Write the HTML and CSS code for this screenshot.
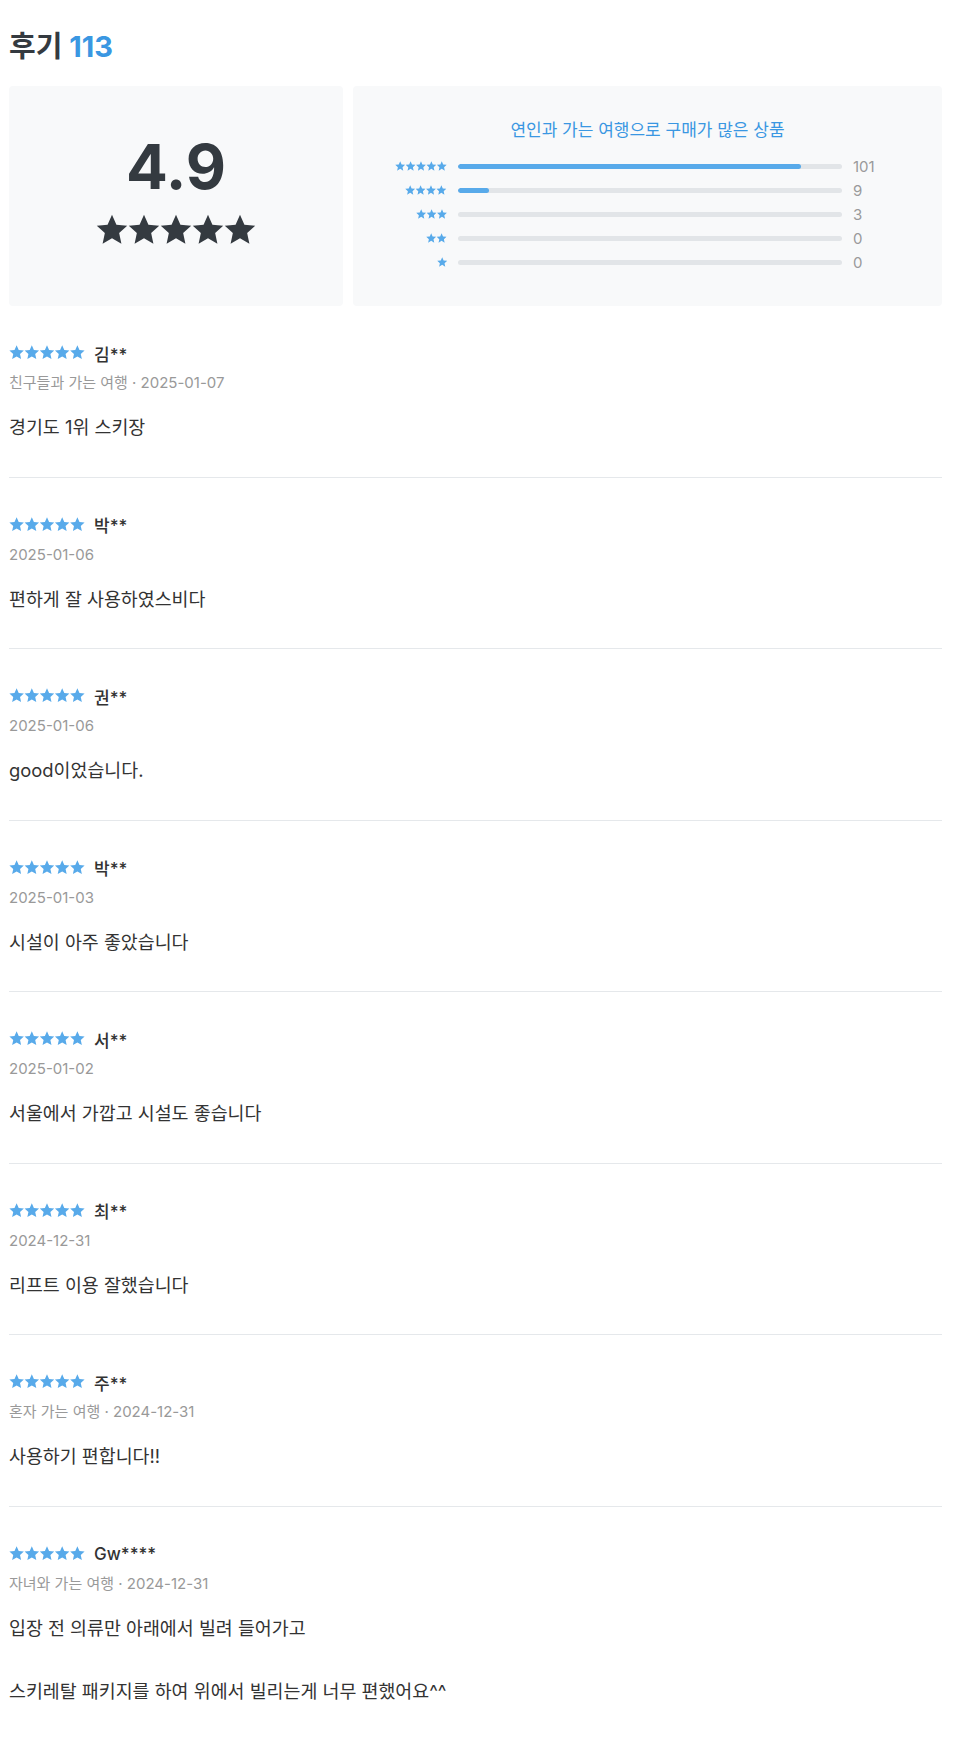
FILE: index.html
```html
<!DOCTYPE html>
<html lang="ko">

<head>
    <meta charset="UTF-8">
    <meta name="viewport" content="width=device-width, initial-scale=1">
    <title>후기</title>
    <link rel="stylesheet" href="styles.css">
</head>

<body>
    <svg class="defs" aria-hidden="true">
        <symbol id="star" viewBox="-10 -10.2 20 19.5">
            <polygon points="0,-10 2.763,-3.802 9.511,-3.09 4.470,1.452 5.878,8.09 0,4.7 -5.878,8.09 -4.470,1.452 -9.511,-3.09 -2.763,-3.802" />
        </symbol>
    </svg>

    <div class="reviews">
        <h2 class="reviews-title">후기 <span class="count">113</span></h2>

        <div class="summary">
            <div class="summary-score">
                <div class="score">4.9</div>
                <svg class="stars stars-big" viewBox="0 0 100 20">
                    <use href="#star" x="0" width="20" height="20" />
                    <use href="#star" x="20" width="20" height="20" />
                    <use href="#star" x="40" width="20" height="20" />
                    <use href="#star" x="60" width="20" height="20" />
                    <use href="#star" x="80" width="20" height="20" />
                </svg>
            </div>

            <div class="summary-dist">
                <p class="dist-title">연인과 가는 여행으로 구매가 많은 상품</p>
                <div class="dist-rows">
                    <div class="dist-row">
                        <svg class="mini-stars" viewBox="0 0 100 20">
                            <use href="#star" x="0" width="20" height="20" />
                            <use href="#star" x="20" width="20" height="20" />
                            <use href="#star" x="40" width="20" height="20" />
                            <use href="#star" x="60" width="20" height="20" />
                            <use href="#star" x="80" width="20" height="20" />
                        </svg>
                        <div class="bar"><div class="bar-fill" style="width: 89.4%"></div></div>
                        <span class="dist-count">101</span>
                    </div>
                    <div class="dist-row">
                        <svg class="mini-stars" viewBox="0 0 80 20">
                            <use href="#star" x="0" width="20" height="20" />
                            <use href="#star" x="20" width="20" height="20" />
                            <use href="#star" x="40" width="20" height="20" />
                            <use href="#star" x="60" width="20" height="20" />
                        </svg>
                        <div class="bar"><div class="bar-fill" style="width: 8%"></div></div>
                        <span class="dist-count">9</span>
                    </div>
                    <div class="dist-row">
                        <svg class="mini-stars" viewBox="0 0 60 20">
                            <use href="#star" x="0" width="20" height="20" />
                            <use href="#star" x="20" width="20" height="20" />
                            <use href="#star" x="40" width="20" height="20" />
                        </svg>
                        <div class="bar"><div class="bar-fill" style="width: 0%"></div></div>
                        <span class="dist-count">3</span>
                    </div>
                    <div class="dist-row">
                        <svg class="mini-stars" viewBox="0 0 40 20">
                            <use href="#star" x="0" width="20" height="20" />
                            <use href="#star" x="20" width="20" height="20" />
                        </svg>
                        <div class="bar"><div class="bar-fill" style="width: 0%"></div></div>
                        <span class="dist-count">0</span>
                    </div>
                    <div class="dist-row">
                        <svg class="mini-stars" viewBox="0 0 20 20">
                            <use href="#star" x="0" width="20" height="20" />
                        </svg>
                        <div class="bar"><div class="bar-fill" style="width: 0%"></div></div>
                        <span class="dist-count">0</span>
                    </div>
                </div>
            </div>
        </div>

        <ul class="review-list" id="review-list"></ul>
    </div>

    <script>
        const reviews = [
            { name: '김**', trip: '친구들과 가는 여행', date: '2025-01-07', text: '경기도 1위 스키장' },
            { name: '박**', date: '2025-01-06', text: '편하게 잘 사용하였스비다' },
            { name: '권**', date: '2025-01-06', text: 'good이었습니다.' },
            { name: '박**', date: '2025-01-03', text: '시설이 아주 좋았습니다' },
            { name: '서**', date: '2025-01-02', text: '서울에서 가깝고 시설도 좋습니다' },
            { name: '최**', date: '2024-12-31', text: '리프트 이용 잘했습니다' },
            { name: '주**', trip: '혼자 가는 여행', date: '2024-12-31', text: '사용하기 편합니다!!' },
            { name: 'Gw****', trip: '자녀와 가는 여행', date: '2024-12-31', text: '입장 전 의류만 아래에서 빌려 들어가고\n\n스키레탈 패키지를 하여 위에서 빌리는게 너무 편했어요^^' }
        ];

        function starRow() {
            let uses = '';
            for (let i = 0; i < 5; i++) {
                uses += `<use href="#star" x="${i * 20}" width="20" height="20" />`;
            }
            return `<svg class="stars stars-review" viewBox="0 0 100 20">${uses}</svg>`;
        }

        const list = document.getElementById('review-list');
        reviews.forEach(review => {
            const item = document.createElement('li');
            item.className = 'review';
            const meta = review.trip ? `${review.trip} · ${review.date}` : review.date;
            item.innerHTML = `
                <div class="review-head">${starRow()}<span class="review-name">${review.name}</span></div>
                <div class="review-meta">${meta}</div>
                <p class="review-text"></p>`;
            item.querySelector('.review-text').textContent = review.text;
            list.appendChild(item);
        });
    </script>
</body>

</html>
```

FILE: styles.css
```css
body,
h2,
p,
ul {
    margin: 0;
    padding: 0;
}

body {
    font-family: Inter, "Noto Sans CJK KR", sans-serif;
    background: #fff;
    color: #333;
}

.defs {
    position: absolute;
    width: 0;
    height: 0;
    overflow: hidden;
}

.reviews {
    margin: 0 16px 0 9px;
}

.reviews-title {
    margin: 30px 0 22px;
    font-size: 29px;
    line-height: 34px;
    font-weight: 700;
    color: #343a40;
}

.reviews-title .count {
    color: #3a97e2;
}

.summary {
    display: grid;
    grid-template-columns: 334px 1fr;
    gap: 10px;
    height: 220px;
}

.summary-score,
.summary-dist {
    background: #f8f9fa;
    border-radius: 4px;
    display: flex;
    flex-direction: column;
    justify-content: center;
}

.summary-score {
    align-items: center;
}

.score {
    font-size: 62px;
    line-height: 1;
    font-weight: 700;
    color: #343a40;
}

.stars {
    display: block;
    fill: #58aaea;
}

.stars-big {
    width: 160px;
    height: 32px;
    margin: 16px 0 11px;
    fill: #343a40;
}

.dist-title {
    text-align: center;
    font-size: 17px;
    line-height: 24px;
    color: #3a97e2;
    margin-bottom: 12px;
}

.dist-rows {
    padding: 0 41px 0 30px;
}

.dist-row {
    display: grid;
    grid-template-columns: 64px 1fr 48px;
    column-gap: 11px;
    align-items: center;
    height: 24px;
}

.mini-stars {
    justify-self: end;
    height: 10.4px;
    fill: #58aaea;
}

.bar {
    height: 5px;
    background: #e2e5e8;
    border-radius: 3px;
    overflow: hidden;
}

.bar-fill {
    height: 100%;
    background: #58aaea;
    border-radius: 3px;
}

.dist-count {
    font-size: 15px;
    color: #9a9a9a;
}

.review-list {
    list-style: none;
}

.review {
    padding: 36px 0 33px;
    border-bottom: 1px solid #e5e8eb;
}

.review-head {
    display: flex;
    align-items: center;
    gap: 9px;
    height: 22px;
}

.stars-review {
    width: 76px;
    height: 15.2px;
}

.review-name {
    font-size: 17px;
    font-weight: 500;
    color: #333;
}

.review-meta {
    margin-top: 8px;
    font-size: 15px;
    line-height: 22px;
    color: #999;
}

.review-text {
    margin-top: 18px;
    font-size: 18.4px;
    line-height: 31.5px;
    color: #333;
    white-space: pre-line;
}
```
